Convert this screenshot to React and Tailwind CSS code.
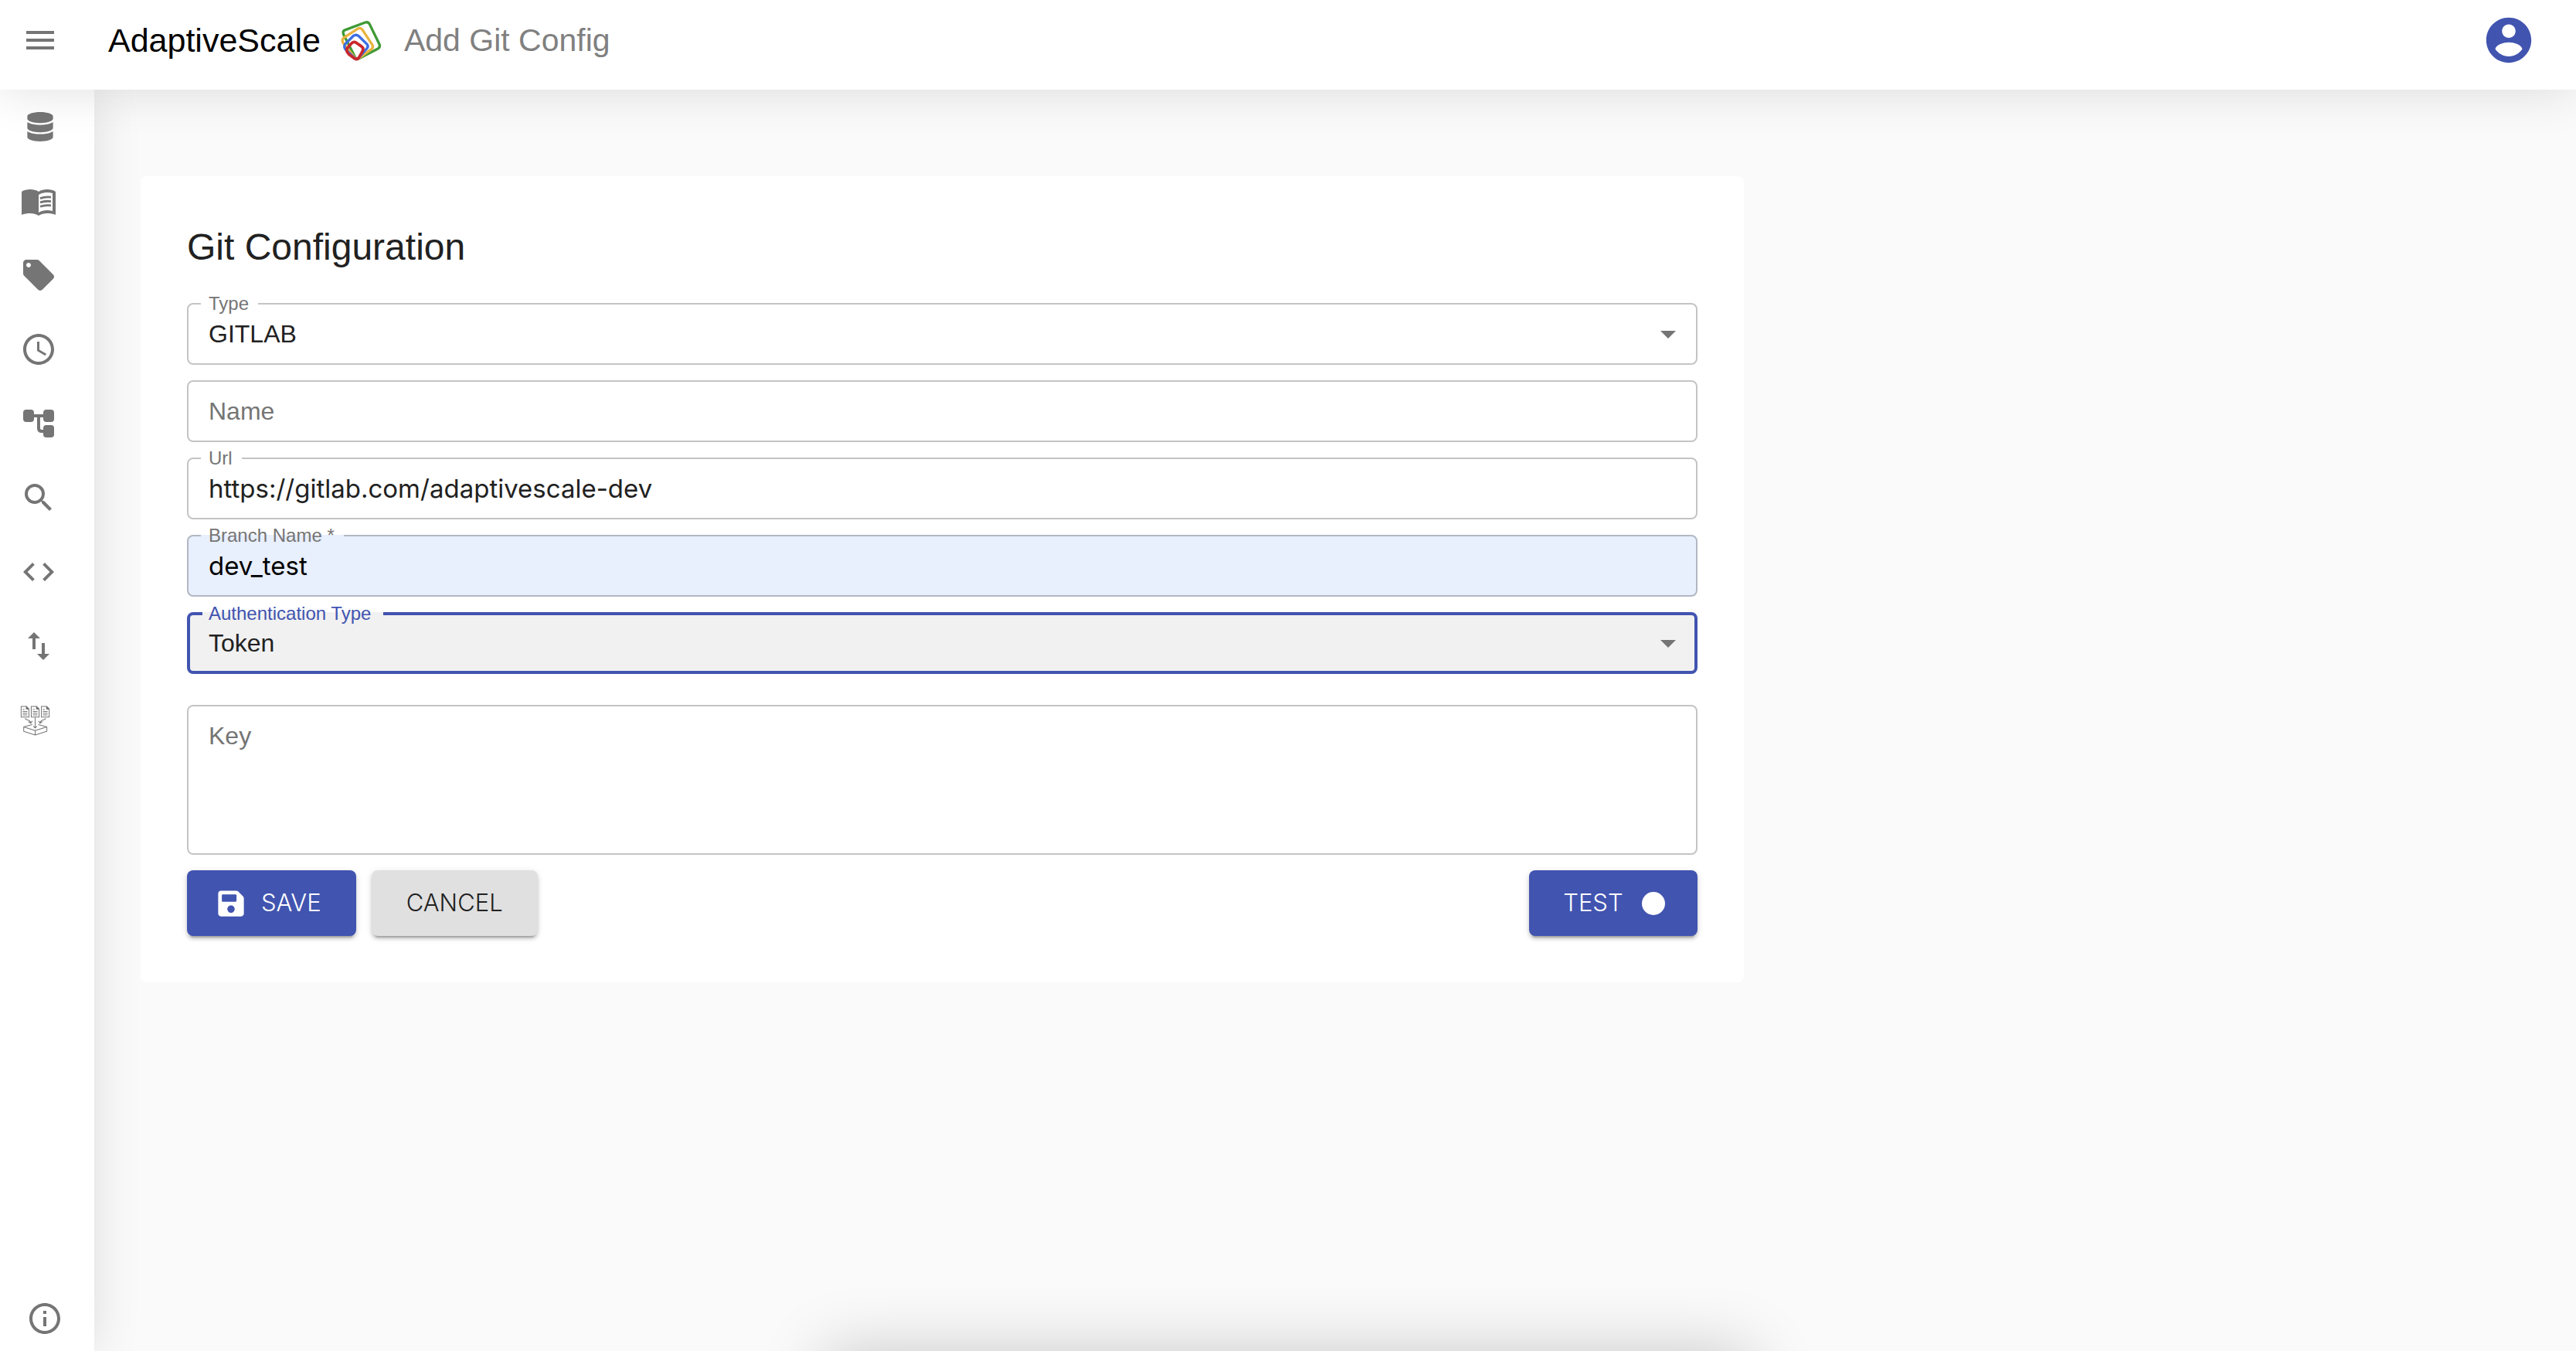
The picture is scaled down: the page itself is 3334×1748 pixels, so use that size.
import { MdMenu, MdLocalOffer, MdAccessTime, MdSearch, MdCode, MdImportExport, MdInfoOutline, MdArrowDropDown } from "react-icons/md";
import { FaDatabase, FaSave } from "react-icons/fa";

function BrandLogo() {
  return (
    <svg viewBox="36 24 160 164" className="h-[55px] w-[54px]" fill="none" strokeLinejoin="round" aria-hidden="true">
      <path d="M50 66 L130 36 Q142 32 147 43 L185 121 Q189 132 179 137 L104 176 Q96 180 91 170 L46 82 Q42 70 50 66Z" stroke="#3f9a35" strokeWidth="10" />
      <path d="M46 96 L100 61 Q112 54 119 64 L157 122 Q163 132 154 139 L103 176 Q95 180 89 171 L46 117 Q38 104 46 96Z" stroke="#e8b33f" strokeWidth="10" />
      <path d="M53 119 L84 88 Q95 80 105 89 L136 119 Q144 128 136 137 L103 174 Q96 181 88 173 L53 139 Q46 129 53 119Z" stroke="#3b6ee2" strokeWidth="10" />
      <path d="M61 135 L78 116 Q86 109 95 114 L115 128 Q125 135 120 146 L106 171 Q98 182 87 174 L66 158 Q54 147 61 135Z" stroke="#c9272d" strokeWidth="11" />
    </svg>
  );
}

function AccountIcon() {
  return (
    <svg viewBox="0 0 24 24" className="size-[70px]" fill="currentColor" aria-hidden="true">
      <path d="M12 2C6.48 2 2 6.48 2 12s4.48 10 10 10 10-4.48 10-10S17.52 2 12 2zm0 3c1.66 0 3 1.34 3 3s-1.34 3-3 3-3-1.34-3-3 1.34-3 3-3zm0 14.2c-2.5 0-4.71-1.28-6-3.22.03-1.99 4-3.08 6-3.08 1.99 0 5.97 1.09 6 3.08-1.29 1.94-3.5 3.22-6 3.22z" />
    </svg>
  );
}

function BookIcon() {
  return (
    <svg viewBox="0 0 24 24" className="size-12" fill="currentColor" aria-hidden="true">
      <path
        fillRule="evenodd"
        d="M1 6c1.45-1.1 3.55-1.5 5.5-1.5S10.55 4.9 12 6c1.45-1.1 3.55-1.5 5.5-1.5S21.55 4.9 23 6v15c-1.65-.7-3.85-1-5.5-1-1.7 0-4.15.65-5.5 1.5-1.35-.85-3.8-1.5-5.5-1.5-1.65 0-3.85.3-5.5 1zM12 8v11.5c1.35-.85 3.8-1.5 5.5-1.5 1.2 0 2.4.15 3.5.5V7c-1.1-.35-2.3-.5-3.5-.5-1.7 0-4.15.65-5.5 1.5z"
      />
      <path d="M13 10.3q3.300-1.200 7-.7M13 12.960q3.300-1.200 7-.7M13 15.620q3.300-1.200 7-.7" fill="none" stroke="currentColor" strokeWidth="1.4" />
    </svg>
  );
}

function TreeIcon() {
  return (
    <svg viewBox="0 0 24 24" className="size-12" fill="currentColor" aria-hidden="true">
      <rect x="2" y="3" width="7" height="8" rx="2" />
      <rect x="15" y="3" width="7" height="8" rx="2" />
      <rect x="15" y="13" width="7" height="8" rx="2" />
      <path d="M9 7h6M12 7v8q0 2 2 2h1" fill="none" stroke="currentColor" strokeWidth="2" />
    </svg>
  );
}

function DocSheet({ x }) {
  return (
    <g transform={`translate(${x} 40)`}>
      <path d="M1 1h20l10 10v31H1z" />
      <path d="M21 1v10h10z" fill="currentColor" />
      <path d="M7 13h7M7 20h18M7 27h18M7 34h18" />
    </g>
  );
}

function PipelineIcon() {
  return (
    <svg viewBox="32 38 116 116" className="size-[39px]" fill="none" stroke="currentColor" strokeWidth="3" strokeLinejoin="round" aria-hidden="true">
      <DocSheet x={35} />
      <DocSheet x={74} />
      <DocSheet x={113} />
      <path d="M90 83v40M83 117l7 7 7-7M52 86c0 10 19 4 21 18M64 99l9 7 6-9M130 86c0 10-19 4-21 18M103 97l6 9 9-7" />
      <path d="M79 111L46 120l44 14 45-14-33-9M46 120v17l44 14 45-14v-17M90 134v17" />
    </svg>
  );
}

const NAV = [
  { label: "Data sources", icon: <FaDatabase size={38} />, place: "pl-[33px]" },
  { label: "Catalog", icon: <BookIcon />, place: "pl-[26px]" },
  { label: "Tags", icon: <MdLocalOffer size={48} />, place: "pl-[26px]" },
  { label: "History", icon: <MdAccessTime size={48} />, place: "pl-[26px]" },
  { label: "Lineage", icon: <TreeIcon />, place: "pl-[26px]" },
  { label: "Search", icon: <MdSearch size={48} />, place: "pl-[26px]" },
  { label: "Code", icon: <MdCode size={48} />, place: "pl-[26px]" },
  { label: "Import and export", icon: <MdImportExport size={48} />, place: "pl-[26px]" },
  { label: "Pipelines", icon: <PipelineIcon />, place: "pl-[26px]" },
];

const CONTROL = "block h-20 w-full appearance-none rounded-lg bg-transparent outline-none placeholder:text-[#757575] placeholder:opacity-100";

/* Outlined box whose label interrupts the top border. */
function Field({ id, label, tone = "", focused = false, children }) {
  return (
    <div className={`relative rounded-lg ${tone}`}>
      {children}
      <fieldset
        className={`pointer-events-none absolute inset-x-0 bottom-0 rounded-lg px-4 ${
          focused ? "-top-[10px] border-4 border-[#4154b0]" : "-top-[11px] border-2 border-black/[.23]"
        }`}
      >
        <legend className={`text-2xl leading-6 ${focused ? "pr-4 pl-2 text-[#4154b0]" : "pr-3 pl-[10px] text-[#757575]"}`}>
          <label htmlFor={id}>{label}</label>
        </legend>
      </fieldset>
    </div>
  );
}

function DropArrow() {
  return <MdArrowDropDown size={48} className="pointer-events-none absolute top-4 right-[14px] text-[#757575]" />;
}

const BUTTON =
  "flex h-[85px] items-center rounded-lg font-['Inter',sans-serif] text-[31px] font-light shadow-[0_6px_2px_-4px_rgba(0,0,0,.2),0_4px_4px_rgba(0,0,0,.14),0_2px_10px_rgba(0,0,0,.12)]";

export default function App() {
  return (
    <div className="relative flex min-h-screen flex-col overflow-hidden bg-[#fafafa] font-['Liberation_Sans',Arial,sans-serif] text-[#212121]">
      <header className="relative z-20 flex h-[116px] items-center bg-white pr-[52px] pb-3 pl-7 shadow-[0_0_64px_rgba(0,10,10,.13)]">
        <button type="button" aria-label="Menu" className="text-[#757575]">
          <MdMenu size={48} />
        </button>
        <span className="ml-16 text-[43px] leading-none text-black">AdaptiveScale</span>
        <span className="mr-7 ml-[26px]">
          <BrandLogo />
        </span>
        <h1 className="flex-1 text-[41px] leading-none text-[#808080]">Add Git Config</h1>
        <button type="button" aria-label="Account" className="text-[#4154b0]">
          <AccountIcon />
        </button>
      </header>

      <div className="flex flex-1">
        <nav className="relative z-10 flex w-[122px] flex-col bg-white text-[#757575] shadow-[0_0_64px_rgba(0,0,0,.12)]">
          {NAV.map((item) => (
            <a key={item.label} href="#" aria-label={item.label} className={`flex h-24 items-center ${item.place}`}>
              {item.icon}
            </a>
          ))}
          <a href="#" aria-label="About" className="mt-auto flex pb-[18px] pl-[34px]">
            <MdInfoOutline size={48} />
          </a>
        </nav>

        <main className="flex-1 pt-28 pr-10 pb-28 pl-[60px]">
          <form className="w-2/3 rounded-lg bg-white p-[60px]">
            <h2 className="text-5xl leading-[64px]">Git Configuration</h2>
            <div className="mt-10 flex flex-col gap-5">
              <Field id="type" label="Type">
                <select id="type" defaultValue="GITLAB" className={`${CONTROL} px-7 text-[32px]`}>
                  <option>GITLAB</option>
                </select>
                <DropArrow />
              </Field>
              <input aria-label="Name" placeholder="Name" className={`${CONTROL} border-2 border-black/[.23] px-[26px] text-[32px]`} />
              <Field id="url" label="Url">
                <input id="url" defaultValue="https://gitlab.com/adaptivescale-dev" className={`${CONTROL} px-7 font-['Inter',sans-serif] text-[33px]`} />
              </Field>
              <Field id="branch" label="Branch Name *" tone="bg-[#e8effd]">
                <input id="branch" defaultValue="dev_test" className={`${CONTROL} px-7 font-['Inter',sans-serif] text-[33px] text-black`} />
              </Field>
              <Field id="auth" label="Authentication Type" tone="bg-[#f1f1f1]" focused>
                <select id="auth" defaultValue="Token" className={`${CONTROL} px-7 text-[32px]`}>
                  <option>Token</option>
                </select>
                <DropArrow />
              </Field>
              <textarea
                aria-label="Key"
                placeholder="Key"
                className="mt-5 block h-[194px] w-full resize-none rounded-lg border-2 border-black/[.23] bg-transparent px-[26px] pt-[18px] text-[32px] leading-10 outline-none placeholder:text-[#757575] placeholder:opacity-100"
              />
              <div className="flex gap-5">
                <button type="button" className={`${BUTTON} gap-5 bg-[#4154b0] pr-[45px] pl-[38px] text-white`}>
                  <FaSave size={38} />
                  SAVE
                </button>
                <button type="button" className={`${BUTTON} bg-[#e0e0e0] px-[45px]`}>CANCEL</button>
                <button type="button" className={`${BUTTON} ml-auto gap-6 bg-[#4154b0] pr-[42px] pl-11 text-white`}>
                  TEST
                  <span className="size-[30px] rounded-full bg-white" />
                </button>
              </div>
            </div>
          </form>
        </main>
      </div>

      <div className="pointer-events-none absolute top-full left-1/2 h-40 w-[36%] -translate-x-1/2 shadow-[0_0_86px_rgba(0,0,0,.2)]" />
    </div>
  );
}
